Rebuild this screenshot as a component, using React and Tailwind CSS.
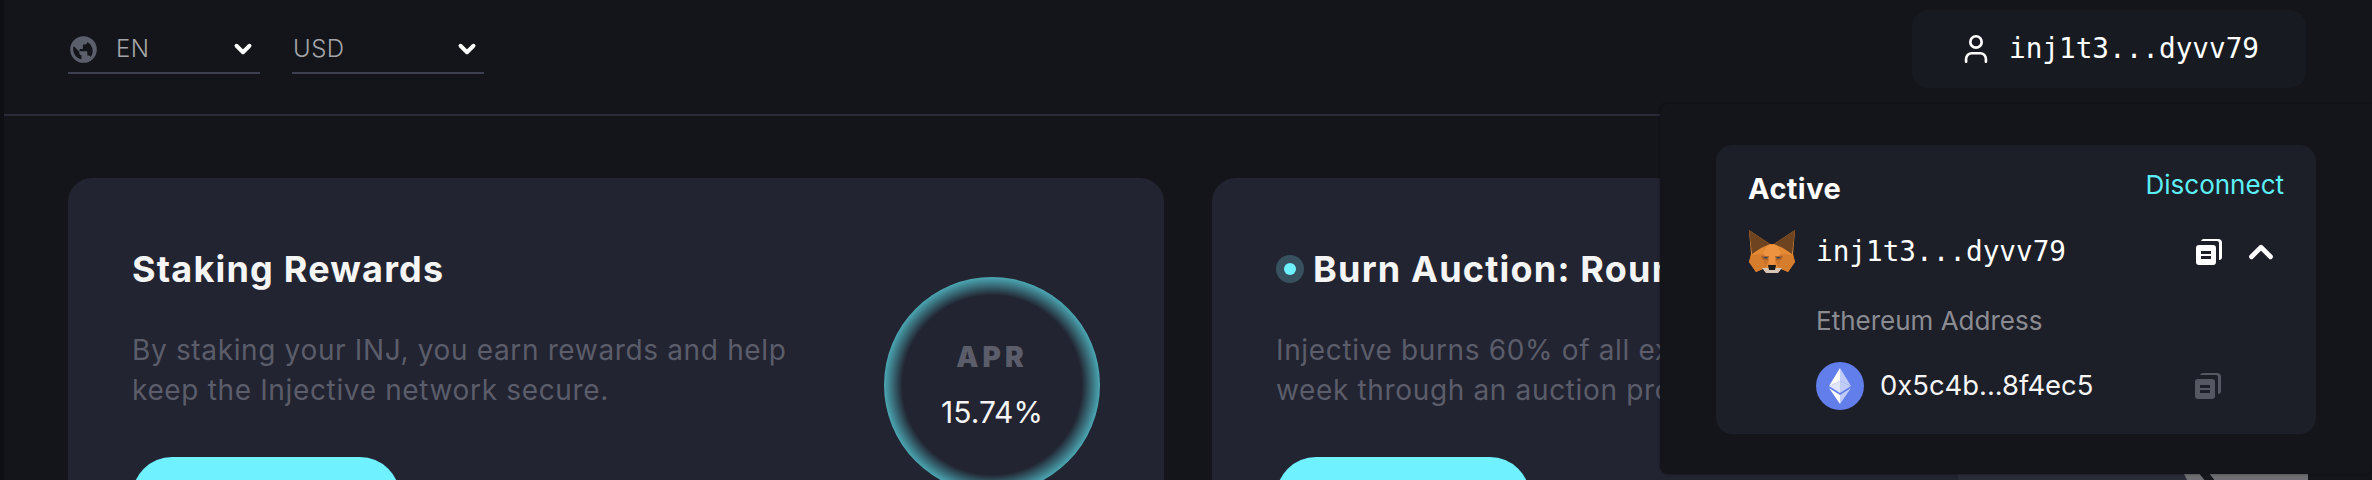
import React from 'react';
import { ChevronDown, ChevronUp, User } from 'lucide-react';

const sans = 'font-["Inter",sans-serif]';
const mono = 'font-["DejaVu_Sans_Mono",monospace]';

function Globe() {
  return (
    <svg viewBox="0 0 24 24" className="w-[29px] h-[29px] text-[#5a5f6b]" fill="currentColor">
      <path d="M12 1a11 11 0 1 0 0 22 11 11 0 0 0 0-22Zm-8.6 11c0-1 .2-2 .5-2.9l4.6 4.7v1.1c0 1 .8 1.8 1.8 1.8v3.5A8.6 8.6 0 0 1 3.4 12Zm14.5 6.3c-.3-.8-1-1.3-1.8-1.3h-.9v-2.7c0-.5-.4-.9-.9-.9H8.8v-1.8h1.8c.5 0 .9-.4.9-.9V7.9h1.8c1 0 1.8-.8 1.8-1.8v-.4a8.6 8.6 0 0 1 2.8 12.6Z" />
    </svg>
  );
}

function Select({ label, icon }) {
  return (
    <div className="w-[192px] h-[40px] border-b-2 border-[#3d404e] flex items-center pb-[8px] pr-[4px] pl-[1px]">
      {icon}
      <span className={`${sans} text-[24px] font-light tracking-[0.5px] text-[#a4a5a9] ${icon ? 'ml-[18px]' : ''}`}>{label}</span>
      <ChevronDown className="ml-auto text-white" size={26} strokeWidth={3.6} />
    </div>
  );
}

function CopyIcon({ color }) {
  return (
    <svg viewBox="0 0 28 28" className={`w-[28px] h-[28px] ${color}`} fill="currentColor">
      <path d="M9 1h14a4 4 0 0 1 4 4v14a3 3 0 0 1-3 3v-17a2 2 0 0 0-2-2H6a3 3 0 0 1 3-2Z" />
      <path fillRule="evenodd" d="M4 7h14a3 3 0 0 1 3 3v14a3 3 0 0 1-3 3H4a3 3 0 0 1-3-3V10a3 3 0 0 1 3-3Zm2 6v3h10v-3H6Zm0 5v3h10v-3H6Z" />
    </svg>
  );
}

function Fox() {
  return (
    <svg viewBox="0 0 48 44" className="w-[48px] h-[44px]">
      <polygon points="1,0 22,14 26,14 47,0 45,24 47,32 40,42 31,38 17,38 8,42 1,32 3,24" fill="#e48a35" />
      <polygon points="1,0 22,14 13,18 4,24" fill="#6e4320" />
      <polygon points="47,0 26,14 35,18 44,24" fill="#6e4320" />
      <polygon points="20,15 28,15 33,24 24,36 15,24" fill="#ee9440" />
      <polygon points="3,25 15,24 17,38 8,42 1,32" fill="#d67c2d" />
      <polygon points="45,25 33,24 31,38 40,42 47,32" fill="#d67c2d" />
      <polygon points="15,24 21,30 17,38" fill="#c9722b" />
      <polygon points="33,24 27,30 31,38" fill="#c9722b" />
      <polygon points="13,26 21,26 20,30 15,30" fill="#a9662f" />
      <polygon points="35,26 27,26 28,30 33,30" fill="#a9662f" />
      <polygon points="15,27 20,27 18,29" fill="#3a4656" />
      <polygon points="33,27 28,27 30,29" fill="#3a4656" />
      <polygon points="14,38 34,38 30,43 18,43" fill="#d9c6b8" />
      <polygon points="20,35 28,35 27,40 21,40" fill="#1b1b1b" />
    </svg>
  );
}

function Eth() {
  return (
    <svg viewBox="0 0 48 48" className="w-[48px] h-[48px]">
      <circle cx="24" cy="24" r="24" fill="#627eea" />
      <polygon points="24,6 24,19 35,24" fill="#fff" fillOpacity="0.6" />
      <polygon points="24,6 13,24 24,19" fill="#fff" />
      <polygon points="24,19 13,24 24,31" fill="#fff" fillOpacity="0.8" />
      <polygon points="24,19 35,24 24,31" fill="#c1ccf7" />
      <polygon points="24,33 24,42 35,26" fill="#fff" fillOpacity="0.6" />
      <polygon points="24,33 13,26 24,42" fill="#fff" />
    </svg>
  );
}

function Card({ children }) {
  return <div className="relative w-[1096px] h-[420px] shrink-0 bg-[#222431] rounded-[24px] p-[64px] flex overflow-hidden">{children}</div>;
}

// only a sliver of the card artwork shows under the panel
function BurnArt() {
  return (
    <svg viewBox="0 0 350 10" className="absolute right-0 top-[294px] w-[350px] h-[10px]">
      <rect width="350" height="10" fill="#2a2c38" />
      <polygon points="225,0 350,0 350,10 230,10" fill="#707074" />
      <polygon points="240,0 250,0 258,10 248,10" fill="#17181d" />
    </svg>
  );
}

export default function App() {
  return (
    <div className={`${sans} relative w-[2372px] h-[480px] overflow-hidden bg-[#14151a] flex`}>
      <div className="w-[4px] shrink-0 bg-[#0e0f12]" />
      <div className="flex-1 min-w-0">
        <header className="h-[116px] border-b-2 border-[#292b38] px-[64px] flex items-start justify-between">
          <div className="flex gap-[32px] pt-[34px]">
            <Select label="EN" icon={<Globe />} />
            <Select label="USD" />
          </div>
          <div className="mt-[10px] mr-[2px] w-[394px] h-[78px] rounded-[16px] bg-[#171a21] flex items-center justify-center gap-[16px]">
            <User className="text-white" size={34} strokeWidth={1.9} />
            <span className={`${mono} text-[27.7px] text-white`}>inj1t3...dyvv79</span>
          </div>
        </header>
        <div className="flex gap-[48px] pl-[64px] pt-[62px]">
          <Card>
            <div className="w-[690px]">
              <h2 className="text-[36px] leading-[54px] tracking-[1.2px] font-bold text-[#f5f5f5]">Staking Rewards</h2>
              <p className="mt-[34px] w-[680px] text-[28px] leading-[40px] tracking-[0.65px] text-[#5b5d6a]">By staking your INJ, you earn rewards and help keep the Injective network secure.</p>
              <div className="mt-[47px] w-[268px] h-[80px] rounded-[40px] bg-[#6ff1ff]" />
            </div>
            <div className="ml-auto mt-[35px] w-[216px] h-[216px] rounded-full bg-[radial-gradient(circle_closest-side,#222431_83%,#4ba8b4_100%)] flex flex-col items-center justify-center">
              <span className="text-[28px] font-black tracking-[4px] text-[#5b5d6a]">APR</span>
              <span className="mt-[12px] text-[30px] text-[#f5f5f5]">15.74%</span>
            </div>
          </Card>
          <Card>
            <div className="w-[690px]">
              <div className="flex items-center gap-[9px]">
                <span className="w-[28px] h-[28px] rounded-full bg-[#37515f] flex items-center justify-center">
                  <span className="w-[12px] h-[12px] rounded-full bg-[#6ff1ff]" />
                </span>
                <h2 className="text-[36px] leading-[54px] tracking-[1.2px] font-bold text-[#f5f5f5] whitespace-nowrap">Burn Auction: Round 71</h2>
              </div>
              <p className="mt-[34px] w-[680px] text-[28px] leading-[40px] tracking-[0.65px] text-[#5b5d6a] whitespace-nowrap">Injective burns 60% of all exchange fees each<br />week through an auction process.</p>
              <div className="mt-[47px] w-[254px] h-[80px] rounded-[40px] bg-[#6ff1ff]" />
            </div>
            <BurnArt />
          </Card>
        </div>
      </div>

      <div className="absolute left-[1660px] top-[104px] w-[712px] h-[370px] rounded-l-[8px] rounded-br-[8px] bg-[#14151a] shadow-[0_0_3px_rgba(0,0,0,0.5)] pl-[56px] pr-[56px] pt-[41px]">
        <div className="h-[289px] rounded-[16px] bg-[#1c1e28] px-[32px] pt-[24px]">
          <div className="flex items-start justify-between h-[40px]">
            <span className="-mt-[2px] text-[29px] leading-[44px] font-bold tracking-[0.4px] text-white">Active</span>
            <span className="text-[26px] leading-[32px] text-[#5ceff5]">Disconnect</span>
          </div>
          <div className="mt-[21px] flex items-center">
            <Fox />
            <span className={`ml-[20px] ${mono} text-[27.7px] text-white`}>inj1t3...dyvv79</span>
            <div className="ml-auto flex items-center gap-[19px] pr-[4px]">
              <CopyIcon color="text-white" />
              <ChevronUp className="text-white" size={38} strokeWidth={3} />
            </div>
          </div>
          <p className="mt-[28px] ml-[68px] text-[26px] leading-[38px] text-[#8b8c92]">Ethereum Address</p>
          <div className="mt-[22px] ml-[68px] flex items-center">
            <Eth />
            <span className="ml-[16px] text-[27.4px] text-[#f5f5f5]">0x5c4b...8f4ec5</span>
            <div className="ml-auto pr-[62px]"><CopyIcon color="text-[#555862]" /></div>
          </div>
        </div>
      </div>
    </div>
  );
}
